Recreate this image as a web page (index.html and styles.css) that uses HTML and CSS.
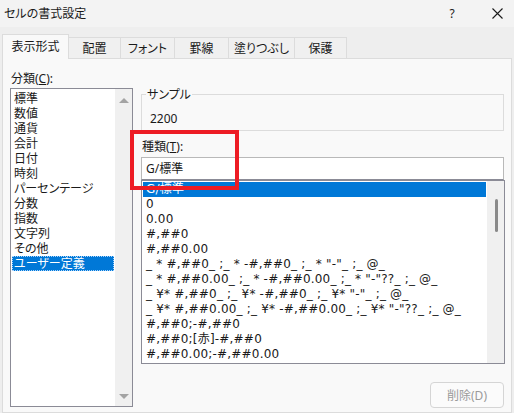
FILE: index.html
```html
<!DOCTYPE html>
<html lang="ja">
<head>
<meta charset="utf-8">
<title>セルの書式設定</title>
<link rel="stylesheet" href="styles.css">
</head>
<body>
<div class="dialog">
  <header class="titlebar">
    <span class="title">セルの書式設定</span>
    <span class="help">?</span>
    <svg class="close" width="11" height="11" viewBox="0 0 11 11"><path d="M0.5 0.5 L10.5 10.5 M10.5 0.5 L0.5 10.5" stroke="#1a1a1a" stroke-width="1.1" fill="none"/></svg>
  </header>
  <nav class="tabs">
    <div class="tab active w67">表示形式</div>
    <div class="tab w52">配置</div>
    <div class="tab w54">フォント</div>
    <div class="tab w54">罫線</div>
    <div class="tab w66">塗りつぶし</div>
    <div class="tab w52">保護</div>
  </nav>
  <main class="panel">
    <section class="col-left">
      <div class="label">分類(<u>C</u>):</div>
      <div class="listbox cat">
        <ul class="items">
          <li>標準</li>
          <li>数値</li>
          <li>通貨</li>
          <li>会計</li>
          <li>日付</li>
          <li>時刻</li>
          <li>パーセンテージ</li>
          <li>分数</li>
          <li>指数</li>
          <li>文字列</li>
          <li>その他</li>
          <li class="selected focus">ユーザー定義</li>
        </ul>
        <div class="vscroll arrows">
          <span class="arrow up"></span>
          <span class="arrow down"></span>
        </div>
      </div>
    </section>
    <section class="col-right">
      <fieldset class="sample">
        <legend>サンプル</legend>
        <div class="sample-value">2200</div>
      </fieldset>
      <div class="label type-label">種類(<u>T</u>):</div>
      <div class="textbox">G/標準</div>
      <div class="listbox formats">
        <ul class="items">
          <li class="selected">G/標準</li>
          <li>0</li>
          <li>0.00</li>
          <li>#,##0</li>
          <li>#,##0.00</li>
          <li>_ * #,##0_ ;_ * -#,##0_ ;_ * "-"_ ;_ @_</li>
          <li>_ * #,##0.00_ ;_ * -#,##0.00_ ;_ * "-"??_ ;_ @_</li>
          <li>_ ¥* #,##0_ ;_ ¥* -#,##0_ ;_ ¥* "-"_ ;_ @_</li>
          <li>_ ¥* #,##0.00_ ;_ ¥* -#,##0.00_ ;_ ¥* "-"??_ ;_ @_</li>
          <li>#,##0;-#,##0</li>
          <li>#,##0;[赤]-#,##0</li>
          <li>#,##0.00;-#,##0.00</li>
        </ul>
        <div class="vscroll"><span class="thumb"></span></div>
      </div>
      <div class="actions">
        <button class="btn" disabled>削除(D)</button>
      </div>
      <div class="highlight"></div>
    </section>
  </main>
</div>
</body>
</html>
```

FILE: styles.css
```css
* { box-sizing: border-box; }
html, body { margin: 0; padding: 0; }
body {
  width: 514px;
  height: 413px;
  overflow: hidden;
  background: #eeeeee;
  font-family: "Noto Sans", "Noto Sans CJK JP", sans-serif;
  font-size: 12px;
  line-height: 15px;
  color: #1a1a1a;
  font-feature-settings: "palt";
}
.dialog { display: flex; flex-direction: column; height: 413px; }

.titlebar {
  height: 27px;
  background: #f3f3f3;
  display: flex;
  align-items: center;
  padding-left: 4px;
}
.title { flex: 1; font-size: 12px; }
.help { width: 10px; margin-right: 35px; font-size: 12px; text-align: center; }
.close { margin-right: 11px; }

.tabs {
  height: 32px;
  display: flex;
  align-items: flex-end;
  padding-left: 2px;
}
.tab {
  height: 21px;
  display: flex;
  align-items: center;
  justify-content: center;
  background: #f0f0f0;
  border-top: 1px solid #dcdcdc;
  border-right: 1px solid #dcdcdc;
  padding-top: 1px;
}
.tab.active {
  height: 25px;
  margin-bottom: -1px;
  background: #f9f9f9;
  border-left: 1px solid #dcdcdc;
  position: relative;
  z-index: 1;
  padding-top: 0;
  padding-bottom: 2px;
}
.w67 { width: 67px; }
.w66 { width: 66px; }
.w54 { width: 54px; }
.w52 { width: 52px; }

.panel {
  margin: 0 2px;
  height: 360px;
  background: #f9f9f9;
  border: 1px solid #dcdcdc;
  display: flex;
  gap: 8px;
  padding: 12px 6px 0 7px;
}

.col-left { width: 123px; display: flex; flex-direction: column; }
.label { height: 15px; }
.col-left .label { margin-bottom: 2px; margin-left: 1px; }

.listbox {
  display: flex;
  background: #ffffff;
  border: 1px solid #8b8b96;
}
.listbox.cat { height: 319px; }
.items {
  list-style: none;
  margin: 0;
  padding: 1px;
  flex: 1;
  white-space: nowrap;
  overflow: hidden;
}
.items li { height: 15px; padding-left: 2px; }
.cat .items { padding-top: 2px; }
.formats .items li {
  padding-left: 3px;
  font-family: "DejaVu Sans", "Noto Sans CJK JP", sans-serif;
  font-size: 12px;
  letter-spacing: 0.2px;
}
.items li.selected { background: #0078d7; color: #ffffff; }
.items li.focus { outline: 1px dotted #a8d4ff; outline-offset: -1px; }

.vscroll {
  width: 17px;
  background: #f0f0f0;
  display: flex;
  flex-direction: column;
  align-items: center;
}
.vscroll.arrows { justify-content: space-between; padding: 9px 0 7px 1px; }
.arrow {
  width: 0;
  height: 0;
  border-left: 5px solid transparent;
  border-right: 5px solid transparent;
}
.arrow.up { border-bottom: 5px solid #a3a3a3; }
.arrow.down { border-top: 5px solid #a3a3a3; }

.col-right {
  width: 364px;
  display: flex;
  flex-direction: column;
  position: relative;
}
.sample {
  margin: 16px 1px 0 0;
  padding: 9px 8px 4px 4px;
  border: 1px solid #dcdcdc;
  min-width: 0;
}
.sample legend { padding: 0 1px; line-height: 15px; }
.sample-value { padding-left: 4px; height: 15px; }

.type-label { margin-top: 8px; margin-left: 1px; }
.textbox {
  margin-top: 3px;
  height: 23px;
  margin-right: 1px;
  background: #ffffff;
  border: 1px solid #b9b9b9;
  border-bottom-color: #8b8b96;
  padding: 3px 0 0 4px;
}
.listbox.formats { height: 184px; }
.formats .items { padding-top: 1px; }
.formats .vscroll { padding-top: 18px; }
.thumb { width: 3px; height: 33px; border-radius: 2px; background: #8a8a8a; margin-left: 1px; }

.actions { display: flex; justify-content: flex-end; margin-top: 18px; padding-right: 1px; }
.btn {
  width: 74px;
  height: 26px;
  border: 1px solid #d5d5d5;
  border-radius: 4px;
  background: #fbfbfb;
  color: #9a9a9a;
  font: inherit;
  padding: 0;
}

.highlight {
  position: absolute;
  left: -11px;
  top: 59px;
  width: 109px;
  height: 60px;
  border: 4px solid #ed1c24;
}
```
